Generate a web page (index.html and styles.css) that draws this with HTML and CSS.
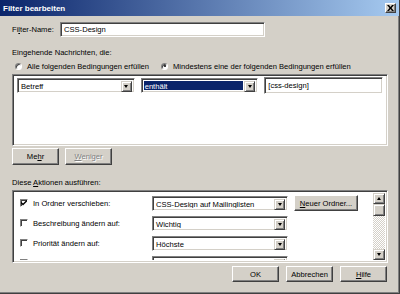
FILE: index.html
```html
<!DOCTYPE html>
<html lang="de">
<head>
    <meta charset="UTF-8">
    <title>Filter bearbeiten</title>
    <link rel="stylesheet" href="styles.css">
</head>
<body>
    <div class="window">
        <div class="titlebar">
            <span class="title">Filter bearbeiten</span>
            <span class="close-btn">
                <svg width="7" height="6" viewBox="0 0 7 6"><path d="M0 0h2l1.5 2L5 0h2L4.5 3 7 6H5L3.5 4 2 6H0l2.5-3z" fill="#000"/></svg>
            </span>
        </div>

        <div class="content">
            <!-- Name -->
            <div class="name-row">
                <span class="name-label">Fi<u>l</u>ter-Name:</span>
                <div class="field name-field">CSS-Design</div>
            </div>

            <div class="caption first">Eingehende Nachrichten, die:</div>
            <div class="radio-row">
                <span class="radio"></span>
                <span class="radio-text">Alle folgenden Bedingungen erfüllen</span>
                <span class="radio checked"></span>
                <span class="radio-text">Mindestens eine der folgenden Bedingungen erfüllen</span>
            </div>

            <!-- Bedingungen -->
            <div class="sunken cond-box">
                <div class="cond-row">
                    <div class="combo cond-combo"><span class="combo-text">Betreff</span><span class="drop"><i></i></span></div>
                    <div class="combo cond-combo"><span class="combo-text selected">enthält</span><span class="drop"><i></i></span></div>
                    <div class="field cond-field">[css-design]</div>
                </div>
            </div>

            <div class="more-row">
                <button class="btn">Me<u>h</u>r</button>
                <button class="btn disabled"><u>W</u>eniger</button>
            </div>

            <div class="caption second">Diese <u>A</u>ktionen ausführen:</div>

            <!-- Aktionen -->
            <div class="sunken action-box">
                <div class="action-rows">
                    <div class="action-row">
                        <span class="check checked">
                            <svg width="6" height="6" viewBox="0 0 6 6"><path d="M0 2.5l2 2 4-4" stroke="#000" stroke-width="1.4" fill="none"/></svg>
                        </span>
                        <span class="action-label">In Ordner verschieben:</span>
                        <div class="combo action-combo"><span class="combo-text">CSS-Design auf Mailinglisten</span><span class="drop"><i></i></span></div>
                        <button class="btn folder-btn"><u>N</u>euer Ordner...</button>
                    </div>
                    <div class="action-row">
                        <span class="check"></span>
                        <span class="action-label">Beschreibung ändern auf:</span>
                        <div class="combo action-combo"><span class="combo-text">Wichtig</span><span class="drop"><i></i></span></div>
                    </div>
                    <div class="action-row">
                        <span class="check"></span>
                        <span class="action-label">Priorität ändern auf:</span>
                        <div class="combo action-combo"><span class="combo-text">Höchste</span><span class="drop"><i></i></span></div>
                    </div>
                    <div class="action-row">
                        <span class="check"></span>
                        <span class="action-label"></span>
                        <div class="combo action-combo"><span class="combo-text"></span><span class="drop"><i></i></span></div>
                    </div>
                </div>
                <div class="scrollbar">
                    <span class="scroll-btn up"><i></i></span>
                    <span class="scroll-thumb"></span>
                    <span class="scroll-track"></span>
                    <span class="scroll-btn"><i></i></span>
                </div>
            </div>

            <div class="footer">
                <button class="btn footer-btn">OK</button>
                <button class="btn footer-btn">Abbrechen</button>
                <button class="btn footer-btn"><u>H</u>ilfe</button>
            </div>
        </div>
    </div>
</body>
</html>
```

FILE: styles.css
```css
body {
    margin: 0;
    padding: 0;
    background: #d4d0c8;
    font-family: "Liberation Sans", Arial, sans-serif;
    font-size: 7.6px;
    color: #000;
}

.window {
    width: 400px;
    height: 294px;
    box-sizing: border-box;
    background: #d4d0c8;
    border-right: 1px solid #404040;
    border-bottom: 1px solid #404040;
    box-shadow: inset -1px -1px #808080;
    display: flex;
    flex-direction: column;
    overflow: hidden;
}

/* Titelleiste */
.titlebar {
    height: 16px;
    flex: none;
    display: flex;
    align-items: center;
    justify-content: space-between;
    padding: 0 3px 0 3px;
    background: linear-gradient(to right, #0a246a, #a6caf0);
    color: #fff;
    font-weight: bold;
    font-size: 8px;
}

.close-btn {
    width: 11px;
    height: 10px;
    box-sizing: border-box;
    display: flex;
    align-items: center;
    justify-content: center;
    background: #d4d0c8;
    border: 1px solid;
    border-color: #fff #404040 #404040 #fff;
    box-shadow: inset -1px -1px #808080;
}

.content {
    padding: 0 11px 0 12px;
    display: flex;
    flex-direction: column;
}

/* 3D-Rahmen */
.field,
.combo,
.sunken {
    box-sizing: border-box;
    background: #fff;
    border: 1px solid;
    border-color: #808080 #fff #fff #808080;
    box-shadow: inset 1px 1px #404040, inset -1px -1px #d4d0c8;
}

.field {
    padding: 0 3px;
    display: flex;
    align-items: center;
}

.btn {
    box-sizing: border-box;
    margin: 0;
    padding: 0;
    font: inherit;
    color: #000;
    background: #d4d0c8;
    border: 1px solid;
    border-color: #fff #404040 #404040 #fff;
    box-shadow: inset -1px -1px #808080;
    text-align: center;
}

.btn.disabled {
    color: #808080;
    text-shadow: 1px 1px #fff;
}

/* Name */
.name-row {
    margin-top: 6px;
    height: 15px;
    display: flex;
    align-items: center;
}

.name-label {
    width: 48px;
}

.name-field {
    width: 205px;
    height: 15px;
}

.caption {
    line-height: 10px;
}

.caption.first {
    margin-top: 11px;
}

.caption.second {
    margin-top: 13px;
}

/* Optionsfelder */
.radio-row {
    margin-top: 3px;
    height: 10px;
    display: flex;
    align-items: center;
}

.radio {
    width: 7px;
    height: 7px;
    box-sizing: border-box;
    border-radius: 50%;
    background: #fff;
    border: 1px solid;
    border-color: #808080 #fff #fff #808080;
    box-shadow: inset 1px 1px #404040;
    margin: 0 5px 0 3px;
    position: relative;
}

.radio.checked:after {
    content: '';
    position: absolute;
    width: 2px;
    height: 2px;
    top: 1.5px;
    left: 1.5px;
    border-radius: 50%;
    background: #000;
}

.radio-text + .radio {
    margin-left: 12px;
}

/* Bedingungen */
.cond-box {
    margin-top: 3px;
    height: 72px;
    width: 376px;
    padding: 2px 4px 0 4px;
}

.cond-row {
    height: 17px;
    display: flex;
    align-items: center;
    gap: 6px;
}

.combo {
    height: 15px;
    display: flex;
    padding: 2px;
}

.combo-text {
    flex: 1;
    padding-left: 1px;
    line-height: 11px;
    white-space: nowrap;
    overflow: hidden;
}

.combo-text.selected {
    background: #0a246a;
    color: #fff;
    margin-right: 1px;
}

.drop,
.scroll-btn {
    width: 11px;
    height: 11px;
    box-sizing: border-box;
    flex: none;
    background: #d4d0c8;
    border: 1px solid;
    border-color: #d4d0c8 #404040 #404040 #d4d0c8;
    box-shadow: inset 1px 1px #fff, inset -1px -1px #808080;
    display: flex;
    align-items: center;
    justify-content: center;
}

.drop i,
.scroll-btn i {
    width: 0;
    height: 0;
    border-left: 2.5px solid transparent;
    border-right: 2.5px solid transparent;
    border-top: 3px solid #000;
}

.scroll-btn.up i {
    border-top: none;
    border-bottom: 3px solid #000;
}

.cond-combo {
    width: 118px;
}

.cond-field {
    width: 119px;
    height: 17px;
}

.more-row {
    margin-top: 2px;
    display: flex;
    gap: 6px;
}

.more-row .btn {
    width: 47px;
    height: 17px;
}

/* Aktionen */
.action-box {
    margin-top: 2px;
    height: 73px;
    width: 376px;
    padding: 2px;
    display: flex;
    overflow: hidden;
}

.action-rows {
    flex: 1;
    overflow: hidden;
}

.action-row {
    height: 20px;
    flex: none;
    display: flex;
    align-items: center;
}

.check {
    width: 8px;
    height: 8px;
    box-sizing: border-box;
    margin: 0 5px;
    background: #fff;
    border: 1px solid;
    border-color: #808080 #fff #fff #808080;
    box-shadow: inset 1px 1px #404040;
    display: flex;
    align-items: center;
    justify-content: center;
}

.action-label {
    width: 119px;
}

.action-combo {
    width: 136px;
}

.folder-btn {
    width: 64px;
    height: 16px;
    margin-left: 6px;
}

.scrollbar {
    width: 12px;
    display: flex;
    flex-direction: column;
}

.scrollbar .scroll-btn {
    width: 12px;
}

.scroll-thumb {
    height: 12px;
    box-sizing: border-box;
    background: #d4d0c8;
    border: 1px solid;
    border-color: #d4d0c8 #404040 #404040 #d4d0c8;
    box-shadow: inset 1px 1px #fff, inset -1px -1px #808080;
}

.scroll-track {
    flex: 1;
    background: repeating-conic-gradient(#fff 0 25%, #d4d0c8 0 50%) 0 0 / 2px 2px;
}

/* Fußzeile */
.footer {
    margin-top: 3px;
    display: flex;
    justify-content: flex-end;
    gap: 7px;
    padding-right: 1px;
}

.footer-btn {
    width: 47px;
    height: 16px;
}
```
